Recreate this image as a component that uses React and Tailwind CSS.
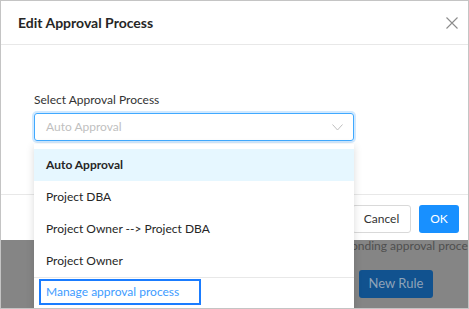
import React from 'react';

const options = [
  { label: 'Auto Approval', active: true },
  { label: 'Project DBA' },
  { label: 'Project Owner --> Project DBA' },
  { label: 'Project Owner' },
];

const CloseIcon = () => (
  <svg width="12" height="12" viewBox="0 0 12 12" fill="none">
    <path d="M0.5 0.5L11.5 11.5M11.5 0.5L0.5 11.5" stroke="#8c8c8c" strokeWidth="1.1" />
  </svg>
);

const ChevronDown = () => (
  <svg width="11" height="7" viewBox="0 0 11 7" fill="none">
    <path d="M0.5 0.5L5.5 6L10.5 0.5" stroke="#bfbfbf" strokeWidth="1" />
  </svg>
);

const App = () => {
  return (
    <div className="relative w-[469px] h-[309px] overflow-hidden border border-[#c4c4c4] bg-[#858585] font-['Lato',sans-serif] text-[12px]">
      {/* Page behind the mask */}
      <div className="pt-[236px]">
        <div className="flex whitespace-nowrap leading-[18px] text-[#4f4f4f]">
          <div className="flex w-[350px] shrink-0 justify-end">
            <span>Please select the corresp</span>
          </div>
          <span>onding approval process</span>
        </div>
        <div className="mt-[15px] pl-[358px]">
          <button className="h-[28px] w-[74px] rounded-[3px] bg-[#11528f] text-[13px] text-[#8fa3b8]">
            New Rule
          </button>
        </div>
      </div>

      {/* Modal */}
      <div className="absolute left-0 right-0 top-0 h-[239px] bg-white">
        {/* Header */}
        <div className="flex h-[44px] items-center justify-between border-b border-[#e8e8e8] pl-[17px] pr-[10px]">
          <h2 className="text-[14px] font-bold text-[#262626]">Edit Approval Process</h2>
          <CloseIcon />
        </div>

        {/* Body */}
        <div className="h-[149px] pl-[33px] pt-[46px]">
          <div className="mb-[4px] leading-[18px] text-[#333333]">Select Approval Process</div>
          <div className="flex h-[28px] w-[320px] items-center justify-between rounded-[3px] border border-[#40a9ff] pl-[11px] pr-[10px] shadow-[0_0_0_2px_rgba(24,144,255,0.2)]">
            <span className="text-[#bfbfbf]">Auto Approval</span>
            <ChevronDown />
          </div>
        </div>

        {/* Footer */}
        <div className="flex justify-end gap-[8px] border-t border-[#e8e8e8] pr-[9px] pt-[10px]">
          <button className="h-[28px] w-[59px] rounded-[3px] border border-[#d9d9d9] bg-white text-[12px] text-[#333333]">
            Cancel
          </button>
          <button className="h-[28px] w-[40px] rounded-[3px] bg-[#1890ff] text-[12px] text-white">
            OK
          </button>
        </div>
      </div>

      {/* Dropdown menu */}
      <div className="absolute left-[33px] top-[143px] h-[200px] w-[320px] bg-white pt-[5px] shadow-[0_2px_8px_rgba(0,0,0,0.15)]">
        {options.map((o) => (
          <div
            key={o.label}
            className={`flex h-[32px] items-center pl-[12px] text-[#262626] ${
              o.active ? 'bg-[#e6f7ff] font-bold' : ''
            }`}
          >
            {o.label}
          </div>
        ))}
        <div className="border-t border-[#e8e8e8] pl-[5px] pt-[1px]">
          <div className="flex h-[26px] w-[162px] items-center border-2 border-[#1a7cff] pl-[5px] text-[#3d9bff]">
            Manage approval process
          </div>
        </div>
      </div>
    </div>
  );
};

export default App;
